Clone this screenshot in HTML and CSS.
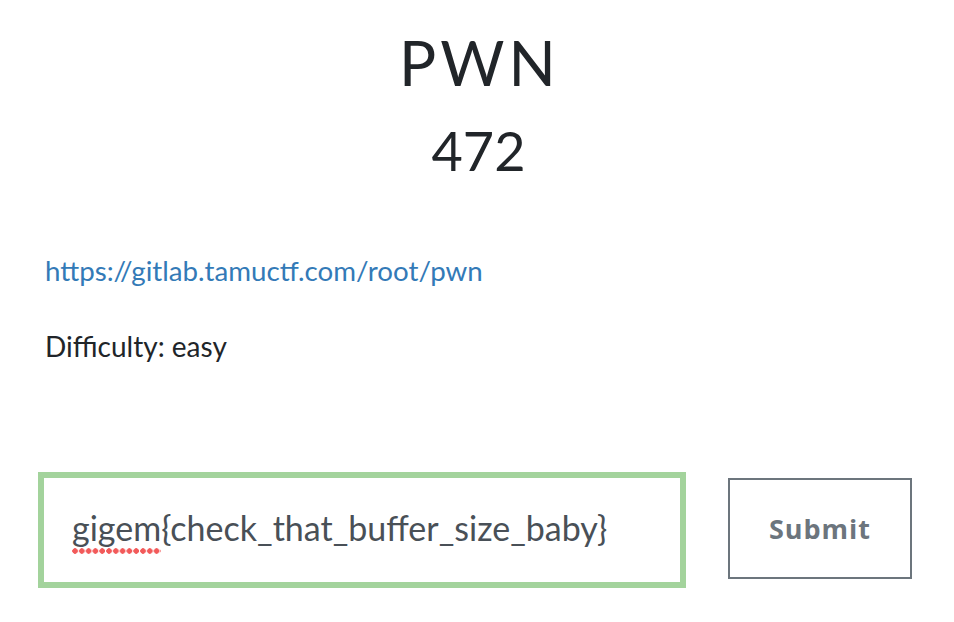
FILE: index.html
```html
<!DOCTYPE html>
<html>
<head>
<meta charset="utf-8">
<link rel="stylesheet" href="styles.css">
</head>
<body>
<div class="modal">
  <h2 class="title">PWN</h2>
  <h3 class="value">472</h3>
  <div class="desc">
    <p class="p-link"><a href="#" class="link">https://gitlab.tamuctf.com/root/pwn</a></p>
    <p class="p-diff">Difficulty: easy</p>
  </div>
  <div class="form-row">
    <div class="answer"><span class="misspelled">gigem</span>{check_that_buffer_size_baby}</div>
    <button class="submit">Submit</button>
  </div>
</div>
</body>
</html>
```
FILE: styles.css
```css
html, body {
  margin: 0;
  padding: 0;
  background: #ffffff;
}
body {
  font-family: Lato, "Liberation Sans", sans-serif;
  color: #212529;
  width: 954px;
  height: 622px;
  overflow: hidden;
}
.modal {
  padding: 25px 42px 0 45px;
}
.title {
  margin: 0;
  text-align: center;
  font-family: Lato, sans-serif;
  font-weight: 400;
  font-size: 62px;
  line-height: 74px;
  color: #212529;
  letter-spacing: 4px;
  padding-left: 2px;
}
.value {
  margin: 19px 0 0 0;
  text-align: center;
  font-weight: 400;
  font-size: 54px;
  line-height: 65px;
  color: #212529;
}
.desc {
  margin-top: 68px;
}
.desc p {
  margin: 0;
  font-size: 28px;
  line-height: 40px;
}
.desc .p-link {
  font-size: 27.7px;
}
.p-diff {
  margin-top: 35px !important;
}
.link {
  color: #337ab7;
  text-decoration: none;
}
.form-row {
  margin-top: 106px;
  margin-left: -7px;
  display: flex;
  align-items: center;
  gap: 42px;
}
.answer {
  box-sizing: border-box;
  width: 648px;
  height: 116px;
  border: 6px solid #a3d39c;
  padding: 0 0 6px 28px;
  display: flex;
  align-items: center;
  font-size: 34px;
  color: #495057;
}
.misspelled {
  position: relative;
}
.misspelled::after {
  content: "";
  position: absolute;
  left: 0;
  right: 0;
  bottom: -6px;
  height: 6px;
  background-image: radial-gradient(circle at 3px 3px, #f25a5a 2.5px, transparent 3px);
  background-size: 6.8px 6px;
  background-repeat: repeat-x;
}
.submit {
  box-sizing: border-box;
  width: 184px;
  height: 101px;
  margin-top: -3px;
  padding: 0;
  background: #ffffff;
  border: 2px solid #6c757d;
  border-radius: 0;
  font-family: "Open Sans", sans-serif;
  font-weight: 700;
  font-size: 27px;
  letter-spacing: 1px;
  color: #6c757d;
}
```
